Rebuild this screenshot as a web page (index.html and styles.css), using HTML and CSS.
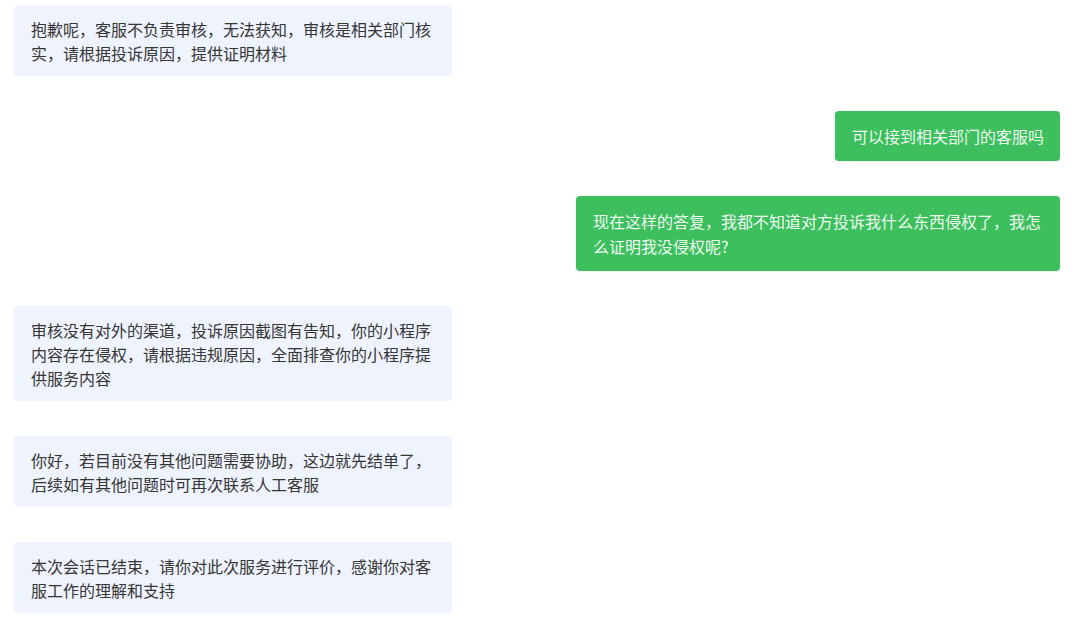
FILE: index.html
```html
<!DOCTYPE html>
<html>
<head>
<meta charset="utf-8">
<meta name="viewport" content="width=device-width, initial-scale=1">
<title>客服会话</title>
<link rel="stylesheet" href="styles.css">
</head>
  <body>
    <div class="chat">
      <div class="msg msg-in">抱歉呢，客服不负责审核，无法获知，审核是相关部门核实，请根据投诉原因，提供证明材料</div>
      <div class="msg msg-out">可以接到相关部门的客服吗</div>
      <div class="msg msg-out">现在这样的答复，我都不知道对方投诉我什么东西侵权了，我怎么证明我没侵权呢?</div>
      <div class="msg msg-in">审核没有对外的渠道，投诉原因截图有告知，你的小程序内容存在侵权，请根据违规原因，全面排查你的小程序提供服务内容</div>
      <div class="msg msg-in">你好，若目前没有其他问题需要协助，这边就先结单了，后续如有其他问题时可再次联系人工客服</div>
      <div class="msg msg-in">本次会话已结束，请你对此次服务进行评价，感谢你对客服工作的理解和支持</div>
    </div>
  </body>
</html>
```

FILE: styles.css
```css
body {
  margin: 0;
  background-color: white;
  font-family: "Noto Sans CJK SC", "Noto Sans", sans-serif;
}

.chat {
  display: flex;
  flex-direction: column;
  gap: 35px;
  padding: 5px 20px 0 14px;
}

.msg {
  font-size: 16px;
  line-height: 24px;
  border-radius: 4px;
  box-sizing: border-box;
}

.msg-in {
  align-self: flex-start;
  width: 438px;
  padding: 12px 10px 11px 17px;
  background-color: #eef3fd;
  color: #363636;
}

.msg-out {
  align-self: flex-end;
  max-width: 484px;
  padding: 13px 16px 12px 17px;
  line-height: 25px;
  background-color: #3dbf5e;
  color: rgba(255, 255, 255, 0.93);
  box-shadow: 0 1px 2px rgba(0, 0, 0, 0.08);
}
```
